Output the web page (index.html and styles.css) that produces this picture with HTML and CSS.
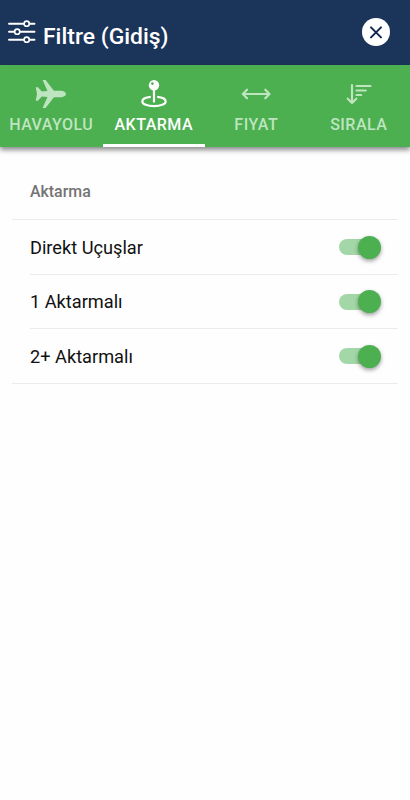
FILE: index.html
```html
<!DOCTYPE html>
<html lang="tr">
<head>
<meta charset="utf-8">
<title>Filtre</title>
<link rel="stylesheet" href="styles.css">
</head>
<body>
<header class="header">
  <svg class="filter-icon" width="28" height="24" viewBox="0 0 28 24" fill="none" stroke="currentColor" stroke-width="1.9" stroke-linecap="round">
    <path d="M1 3.7H16M21.5 3.7H26.5M1 11.7H6.5M12 11.7H26.5M1 19.7H16M21.5 19.7H26.5"/>
    <g stroke-width="1.6"><circle cx="18.7" cy="3.7" r="2.6"/><circle cx="9.2" cy="11.7" r="2.6"/><circle cx="18.7" cy="19.7" r="2.6"/></g>
  </svg>
  <h1 class="title">Filtre (Gidiş)</h1>
  <button class="close" aria-label="Kapat">
    <svg width="28" height="28" viewBox="0 0 28 28"><circle cx="14" cy="14" r="14" fill="#fff"/><path d="M9 9.400L19 19.400M19 9.400L9 19.400" stroke="#10264a" stroke-width="2" stroke-linecap="round"/></svg>
  </button>
</header>
<nav class="tabs">
  <a class="tab">
    <svg width="32" height="30" viewBox="0 0 32 30" fill="currentColor"><path d="M.7 8.200H2.900L6.800 12.500Q10 12.200 12.500 12L7.600 1H10.600L18.900 11.800H25.500C28.500 11.800 31 13.400 31 15C31 16.600 28.500 18.200 25.500 18.200H18.900L10.600 29H7.600L12.500 18Q10 17.800 6.800 17.500L2.900 21.800H.7L2 15Z"/></svg>
    <span>HAVAYOLU</span>
  </a>
  <a class="tab active">
    <svg width="32" height="30" viewBox="0 0 32 30" fill="none" stroke="currentColor"><path d="M12.800 17.800C7.500 18.300 4.300 20 4.300 22.400C4.300 25.200 9.400 27.200 16 27.200S27.700 25.200 27.700 22.400C27.700 20 24.500 18.300 19.200 17.800" stroke-width="2.200"/><path d="M14.900 10H17.100V22.500L16 24.300L14.900 22.500Z" fill="currentColor" stroke="none"/><circle cx="16" cy="6.200" r="5.200" fill="currentColor" stroke="none"/><circle class="pin-highlight" cx="14.400" cy="4.600" r="1.300"/></svg>
    <span>AKTARMA</span>
  </a>
  <a class="tab">
    <svg width="32" height="30" viewBox="0 0 32 30" fill="none" stroke="currentColor" stroke-width="2.200" stroke-linecap="round" stroke-linejoin="round"><path d="M2.800 15H29.500M7 10.700L2.800 15L7 19.300M25.300 10.700L29.500 15L25.300 19.300"/></svg>
    <span>FIYAT</span>
  </a>
  <a class="tab">
    <svg width="32" height="30" viewBox="0 0 32 30" fill="none" stroke="currentColor" stroke-width="2.200" stroke-linecap="round" stroke-linejoin="round"><path d="M9 6V24M4.700 19.700L9 24L13.300 19.700M13.500 7H27.500M13.500 11.500H22.700M13.500 16H18.200"/></svg>
    <span>SIRALA</span>
  </a>
</nav>
<main class="list">
  <h2 class="list-header">Aktarma</h2>
  <div class="row"><span>Direkt Uçuşlar</span><i class="toggle"></i></div>
  <div class="row"><span>1 Aktarmalı</span><i class="toggle"></i></div>
  <div class="row"><span>2+ Aktarmalı</span><i class="toggle"></i></div>
</main>
</body>
</html>
```
FILE: styles.css
```css
* { box-sizing: border-box; }
body {
  margin: 0;
  min-height: 800px;
  background: #fefefe;
  font-family: Roboto, sans-serif;
}
.header {
  display: flex;
  height: 65px;
  padding: 0 20px 0 8px;
  background: #1b345a;
  color: #fff;
}
.filter-icon { margin-top: 20px; }
.title {
  flex: 1;
  margin: 22px 0 0 7px;
  font-size: 22.9px;
  line-height: 29px;
  font-weight: 500;
}
.close {
  width: 28px;
  height: 28px;
  margin-top: 18px;
  padding: 0;
  border: 0;
  background: none;
}
.close svg { display: block; }
.tabs {
  display: grid;
  grid-template-columns: repeat(4, 1fr);
  height: 82px;
  background: #4caf50;
  box-shadow: 0 3px 5px rgba(0, 0, 0, .45);
}
.tab {
  display: flex;
  flex-direction: column;
  align-items: center;
  padding-top: 14px;
  border-bottom: 3px solid transparent;
  color: #bfe5c0;
  font-size: 16px;
  line-height: 20px;
  font-weight: 500;
  letter-spacing: .48px;
}
.tab svg { flex: none; }
.tab span { margin-top: 6px; white-space: nowrap; }
.tab.active { color: #fff; border-color: #fff; }
.pin-highlight { fill: #4caf50; stroke: none; }
.list { padding: 0 12px; }
.list-header {
  height: 73px;
  margin: 0;
  padding: 34px 18px 0;
  border-bottom: 1px solid #ebebeb;
  color: #737373;
  font-size: 15.9px;
  line-height: 22px;
  font-weight: 500;
}
.row {
  display: flex;
  align-items: center;
  justify-content: space-between;
  height: 54.6px;
  margin-left: 18px;
  padding: 1px 17px 0 0;
  border-bottom: 1px solid #ebebeb;
  color: #111;
  font-size: 18.2px;
}
.row:last-child { margin-left: 0; padding-left: 18px; }
.toggle {
  display: flex;
  align-items: center;
  justify-content: flex-end;
  width: 42px;
  height: 16px;
  background: linear-gradient(#a4d7a7, #a4d7a7) left / 34px 16px no-repeat;
  border-radius: 8px;
}
.toggle::after {
  content: "";
  flex: none;
  width: 23px;
  height: 23px;
  border-radius: 50%;
  background: #4caf50;
  box-shadow: 0 2px 4px rgba(0, 0, 0, .38);
}
```
